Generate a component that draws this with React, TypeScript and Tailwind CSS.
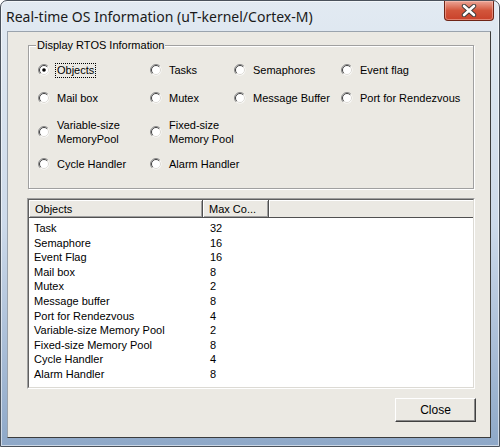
import React from "react";

const options: { label: string[]; checked?: boolean }[] = [
  { label: ["Objects"], checked: true },
  { label: ["Tasks"] },
  { label: ["Semaphores"] },
  { label: ["Event flag"] },
  { label: ["Mail box"] },
  { label: ["Mutex"] },
  { label: ["Message Buffer"] },
  { label: ["Port for Rendezvous"] },
  { label: ["Variable-size", "MemoryPool"] },
  { label: ["Fixed-size", "Memory Pool"] },
  { label: [] },
  { label: [] },
  { label: ["Cycle Handler"] },
  { label: ["Alarm Handler"] },
];

const rows = [
  ["Task", "32"],
  ["Semaphore", "16"],
  ["Event Flag", "16"],
  ["Mail box", "8"],
  ["Mutex", "2"],
  ["Message buffer", "8"],
  ["Port for Rendezvous", "4"],
  ["Variable-size Memory Pool", "2"],
  ["Fixed-size Memory Pool", "8"],
  ["Cycle Handler", "4"],
  ["Alarm Handler", "8"],
];

function Radio({ checked }: { checked?: boolean }) {
  return (
    <svg width="12" height="12" viewBox="0 0 12 12" className="shrink-0">
      <circle cx="6" cy="6" r="5.5" fill="#fff" />
      <path d="M2.1 9.9 A5.5 5.5 0 0 1 9.9 2.1" stroke="#8a8a8a" strokeWidth="1" fill="none" />
      <path d="M2.8 9.2 A4.5 4.5 0 0 1 9.2 2.8" stroke="#404040" strokeWidth="1" fill="none" />
      <path d="M9.2 2.8 A4.5 4.5 0 0 1 2.8 9.2" stroke="#dcdad4" strokeWidth="1" fill="none" />
      {checked && <circle cx="6" cy="6" r="1.8" fill="#000" />}
    </svg>
  );
}

function Option({ label, checked }: { label: string[]; checked?: boolean }) {
  if (label.length === 0) return <div />;
  return (
    <div className="flex items-center gap-[7px]">
      <Radio checked={checked} />
      <span
        className={
          checked
            ? "border border-dotted border-black px-[1px] -ml-[2px] leading-[13px]"
            : "leading-[14px]"
        }
      >
        {label.map((l) => (
          <span key={l} className="block whitespace-nowrap">
            {l}
          </span>
        ))}
      </span>
    </div>
  );
}

export default function App() {
  return (
    <div className="w-[500px] h-[447px] flex flex-col rounded-t-[7px] border border-[#4a525c] bg-linear-to-b from-[#e2eaf2] via-[#cddaea] to-[#8ea8c8] shadow-[inset_0_0_0_1px_rgba(255,255,255,0.55)] overflow-hidden">
      {/* title bar */}
      <div className="h-[30px] flex items-start shrink-0">
        <span
          className="pl-[5px] pt-[6px] text-[14px] leading-[20px] text-[#1a1a1a] whitespace-nowrap"
          style={{ fontFamily: '"Noto Sans", "Open Sans", sans-serif' }}
        >
          Real-time OS Information (uT-kernel/Cortex-M)
        </span>
        <div className="ml-auto mr-[5px] w-[50px] h-[20px] rounded-b-[4px] border border-t-0 border-[#6e2416] bg-linear-to-b from-[#eba597] via-[#d2553b] to-[#c9412a] shadow-[inset_0_0_0_1px_rgba(255,210,200,0.45)] flex items-center justify-center">
          <svg width="16" height="13" viewBox="0 0 16 13">
            <path
              d="M3 2 L13 11 M13 2 L3 11"
              stroke="#3a3a3a"
              strokeWidth="4.4"
              strokeLinecap="round"
            />
            <path
              d="M3 2 L13 11 M13 2 L3 11"
              stroke="#fff"
              strokeWidth="2.6"
              strokeLinecap="round"
            />
          </svg>
        </div>
      </div>

      {/* client area */}
      <div
        className="flex-1 ml-[6px] mr-[8px] mb-[8px] flex flex-col border border-t-[#9aa3ad] border-l-[#9aa3ad] border-r-[#3c3c3c] border-b-[#3c3c3c] bg-[#ebe9e3] text-[11px] text-black"
        style={{ fontFamily: '"Liberation Sans", Arial, sans-serif' }}
      >
        <fieldset className="mt-[6px] ml-[20px] w-[446px] pl-[9px] pt-[4px] pb-[12px] border border-[#a0a0a0] shadow-[1px_1px_0_#fff,inset_1px_1px_0_#fff]">
          <legend className="-ml-[2px] px-[1px] leading-[14px] bg-[#ebe9e3]">
            Display RTOS Information
          </legend>
          <div className="grid grid-cols-[112px_84px_107px_auto] grid-rows-[28px_28px_40px_24px] items-center">
            {options.map((o, i) => (
              <Option key={i} label={o.label} checked={o.checked} />
            ))}
          </div>
        </fieldset>

        {/* list view */}
        <div className="mt-[9px] ml-[19px] w-[448px] h-[191px] border border-t-[#a0a0a0] border-l-[#a0a0a0] border-r-white border-b-white">
          <div className="h-full flex flex-col bg-white border border-t-[#5f5f5f] border-l-[#5f5f5f] border-r-[#dcdad4] border-b-[#dcdad4]">
            <div className="h-[18px] flex shrink-0 bg-[#ebe9e3] leading-[18px]">
              <div className="w-[174px] pl-[6px] border-r border-b border-[#505050] shadow-[inset_1px_1px_0_#fff,inset_-1px_-1px_0_#a0a0a0]">
                Objects
              </div>
              <div className="w-[66px] pl-[6px] border-r border-b border-[#505050] shadow-[inset_1px_1px_0_#fff,inset_-1px_-1px_0_#a0a0a0]">
                Max Co...
              </div>
              <div className="flex-1 border-b border-[#505050] shadow-[inset_1px_1px_0_#fff]" />
            </div>
            <div className="pt-[3px]">
              {rows.map(([name, count]) => (
                <div key={name} className="grid grid-cols-[174px_auto] h-[14.6px] leading-[14.6px]">
                  <span className="pl-[5px] whitespace-nowrap">{name}</span>
                  <span className="pl-[7px]">{count}</span>
                </div>
              ))}
            </div>
          </div>
        </div>

        <button className="self-end mt-[9px] mr-[14px] w-[81px] h-[24px] bg-[#ebe9e3] border border-t-white border-l-white border-r-[#404040] border-b-[#404040] shadow-[inset_-1px_-1px_0_#8a8a8a] text-[12px]">
          Close
        </button>
      </div>
    </div>
  );
}
